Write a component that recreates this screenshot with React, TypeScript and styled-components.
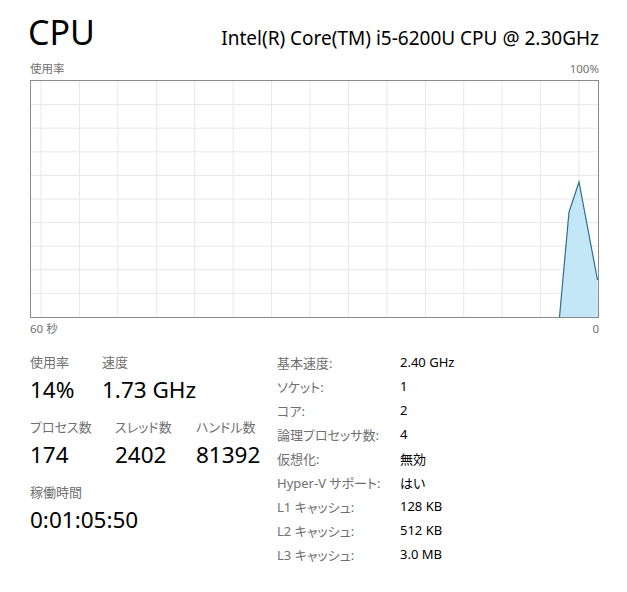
import React from 'react';
import styled, { createGlobalStyle } from 'styled-components';

const GlobalStyle = createGlobalStyle`
  html, body {
    margin: 0;
    padding: 0;
    background: #fff;
  }
  body {
    font-family: "Noto Sans", "Noto Sans CJK JP", sans-serif;
    font-feature-settings: "palt";
    color: #000;
  }
`;

const Page = styled.div`
  width: 569px;
  padding: 10px 0 0 30px;
`;

const Header = styled.div`
  display: flex;
  justify-content: space-between;
  align-items: baseline;
`;

const Title = styled.h1`
  margin: 0 0 0 -2px;
  font-size: 34px;
  font-weight: 400;
  line-height: 45px;
`;

const ProcessorName = styled.div`
  font-size: 19px;
  line-height: 24px;
`;

const AxisRow = styled.div<{ $top: number; $bottom: number }>`
  display: flex;
  justify-content: space-between;
  margin: ${p => p.$top}px 0 ${p => p.$bottom}px;
  font-size: 11.5px;
  line-height: 16px;
  color: #707070;
`;

const GraphBox = styled.div`
  box-sizing: border-box;
  height: 238px;
  border: 1px solid #8a8a8a;
  background: #fff;

  svg {
    display: block;
  }
`;

const Details = styled.div`
  display: flex;
  margin-top: 15px;
`;

const LeftStats = styled.div`
  width: 247px;
  display: flex;
  flex-direction: column;
`;

const StatRow = styled.div`
  display: flex;
  margin-bottom: 9px;
`;

const Stat = styled.div<{ $w?: number }>`
  display: flex;
  flex-direction: column;
  width: ${p => (p.$w ? `${p.$w}px` : 'auto')};
`;

const StatLabel = styled.div`
  font-size: 13px;
  line-height: 20px;
  color: #707070;
`;

const StatValue = styled.div`
  font-size: 22.5px;
  line-height: 36px;
  color: #000;
`;

const SpecTable = styled.div`
  display: grid;
  grid-template-columns: 123px auto;
  grid-auto-rows: 24px;
  align-items: center;
  font-size: 13px;
  margin-top: -2px;
`;

const SpecLabel = styled.div`
  color: #707070;
`;

const SpecValue = styled.div`
  color: #000;
`;

const GRAPH_W = 567;
const GRAPH_H = 236;

// usage samples near the right edge, oldest first
const samples = [
  [528.5, 236],
  [538, 131],
  [548, 101],
  [566.5, 199],
];

const UsageGraph: React.FC = () => {
  const vLines = Array.from({ length: 15 }, (_, i) => 10 + i * 38.43);
  const hLines = Array.from({ length: 9 }, (_, i) => (i + 1) * (GRAPH_H / 10));
  const area = [...samples, [GRAPH_W, GRAPH_H]].map(p => p.join(',')).join(' ');
  const line = samples.map(p => p.join(',')).join(' ');

  return (
    <GraphBox>
      <svg width={GRAPH_W} height={GRAPH_H} viewBox={`0 0 ${GRAPH_W} ${GRAPH_H}`}>
        {vLines.map(x => (
          <line key={`v${x}`} x1={x} y1={0} x2={x} y2={GRAPH_H} stroke="#e8e8e8" strokeWidth={1} />
        ))}
        {hLines.map(y => (
          <line key={`h${y}`} x1={0} y1={y} x2={GRAPH_W} y2={y} stroke="#e8e8e8" strokeWidth={1} />
        ))}
        <polygon points={area} fill="#c4e7f7" />
        <polyline points={line} fill="none" stroke="#2f6f8c" strokeWidth={1.2} />
      </svg>
    </GraphBox>
  );
};

const specs: [string, string][] = [
  ['基本速度:', '2.40 GHz'],
  ['ソケット:', '1'],
  ['コア:', '2'],
  ['論理プロセッサ数:', '4'],
  ['仮想化:', '無効'],
  ['Hyper-V サポート:', 'はい'],
  ['L1 キャッシュ:', '128 KB'],
  ['L2 キャッシュ:', '512 KB'],
  ['L3 キャッシュ:', '3.0 MB'],
];

const App: React.FC = () => {
  return (
    <>
      <GlobalStyle />
      <Page>
        <Header>
          <Title>CPU</Title>
          <ProcessorName>Intel(R) Core(TM) i5-6200U CPU @ 2.30GHz</ProcessorName>
        </Header>
        <AxisRow $top={6} $bottom={3}>
          <span>使用率</span>
          <span>100%</span>
        </AxisRow>
        <UsageGraph />
        <AxisRow $top={3} $bottom={0}>
          <span>60 秒</span>
          <span>0</span>
        </AxisRow>

        <Details>
          <LeftStats>
            <StatRow>
              <Stat $w={72}>
                <StatLabel>使用率</StatLabel>
                <StatValue>14%</StatValue>
              </Stat>
              <Stat>
                <StatLabel>速度</StatLabel>
                <StatValue>1.73 GHz</StatValue>
              </Stat>
            </StatRow>
            <StatRow>
              <Stat $w={85}>
                <StatLabel>プロセス数</StatLabel>
                <StatValue>174</StatValue>
              </Stat>
              <Stat $w={81}>
                <StatLabel>スレッド数</StatLabel>
                <StatValue>2402</StatValue>
              </Stat>
              <Stat>
                <StatLabel>ハンドル数</StatLabel>
                <StatValue>81392</StatValue>
              </Stat>
            </StatRow>
            <StatRow>
              <Stat>
                <StatLabel>稼働時間</StatLabel>
                <StatValue>0:01:05:50</StatValue>
              </Stat>
            </StatRow>
          </LeftStats>

          <SpecTable>
            {specs.map(([label, value]) => (
              <React.Fragment key={label}>
                <SpecLabel>{label}</SpecLabel>
                <SpecValue>{value}</SpecValue>
              </React.Fragment>
            ))}
          </SpecTable>
        </Details>
      </Page>
    </>
  );
};

export default App;
